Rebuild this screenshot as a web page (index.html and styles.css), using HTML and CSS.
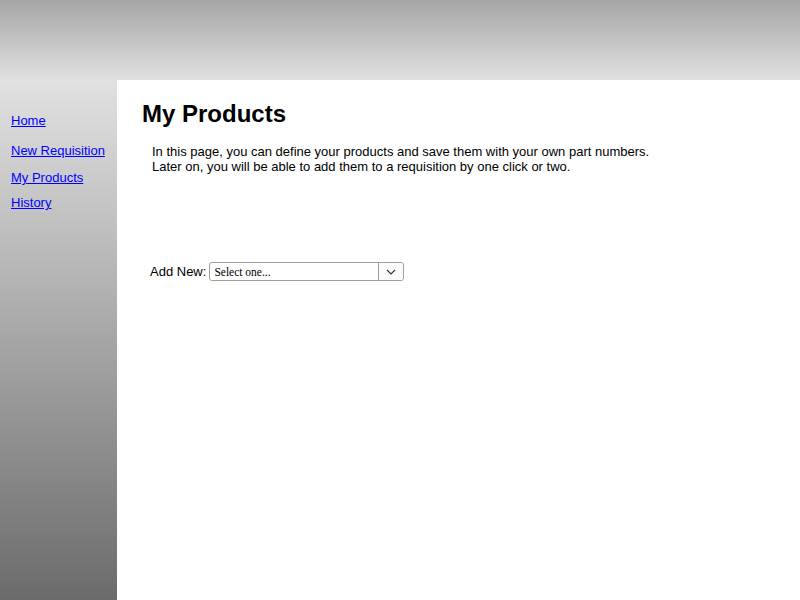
FILE: index.html
```html
<!DOCTYPE html>
<html>
<head>
<meta charset="utf-8">
<title>My Products</title>
<link rel="stylesheet" href="styles.css">
</head>
<body>
<div class="header"></div>
<div class="layout">
  <nav class="sidebar">
    <a class="nav-link nav-home" href="#">Home</a>
    <a class="nav-link nav-req" href="#">New Requisition</a>
    <a class="nav-link nav-prod" href="#">My Products</a>
    <a class="nav-link nav-hist" href="#">History</a>
  </nav>
  <main class="content">
    <h1 class="title">My Products</h1>
    <p class="intro">In this page, you can define your products and save them with your own part numbers.<br>Later on, you will be able to add them to a requisition by one click or two.</p>
    <div class="add-row">
      <label class="add-label">Add New:</label>
      <div class="select">
        <span class="select-text">Select one...</span>
        <span class="select-btn">
          <svg width="10" height="6" viewBox="0 0 10 6"><path d="M1 1 L5 5 L9 1" fill="none" stroke="#333" stroke-width="1.2"/></svg>
        </span>
      </div>
    </div>
  </main>
</div>
</body>
</html>
```
FILE: styles.css
```css
html, body {
  margin: 0;
  padding: 0;
  height: 100%;
}
body {
  font-family: "Liberation Sans", Arial, sans-serif;
  font-size: 13px;
  color: #000;
  background: #fff;
}
.header {
  height: 80px;
  background: linear-gradient(to bottom, #a5a5a5 0%, #e1e1e1 100%);
}
.layout {
  display: flex;
  height: 520px;
}
.sidebar {
  width: 117px;
  flex: none;
  background: linear-gradient(to bottom, #e1e1e1 0%, #6b6b6b 100%);
  display: flex;
  flex-direction: column;
  align-items: flex-start;
  padding: 33px 0 0 11px;
  box-sizing: border-box;
}
.nav-link {
  color: #0000ff;
  text-decoration: underline;
  font-size: 13px;
  line-height: 15px;
}
.nav-req { margin-top: 15px; }
.nav-prod { margin-top: 12px; }
.nav-hist { margin-top: 10px; }
.content {
  flex: 1;
  background: #fff;
  padding: 20px 0 0 25px;
}
.title {
  margin: 0;
  font-size: 24px;
  font-weight: bold;
  line-height: 28px;
}
.intro {
  margin: 16px 0 0 10px;
  line-height: 15px;
  font-size: 13px;
}
.add-row {
  display: flex;
  align-items: center;
  margin: 88px 0 0 8px;
}
.add-label {
  margin-right: 3px;
}
.select {
  width: 193px;
  height: 17px;
  border: 1px solid #a39e95;
  border-radius: 3px;
  display: flex;
  align-items: center;
  background: #fff;
}
.select-text {
  flex: 1;
  font-family: "Liberation Serif", "Times New Roman", serif;
  font-size: 11.5px;
  padding-left: 4px;
}
.select-btn {
  width: 24px;
  height: 17px;
  border-left: 1px solid #a39e95;
  display: flex;
  align-items: center;
  justify-content: center;
  background: #fbfbfb;
  border-radius: 0 3px 3px 0;
}
```
